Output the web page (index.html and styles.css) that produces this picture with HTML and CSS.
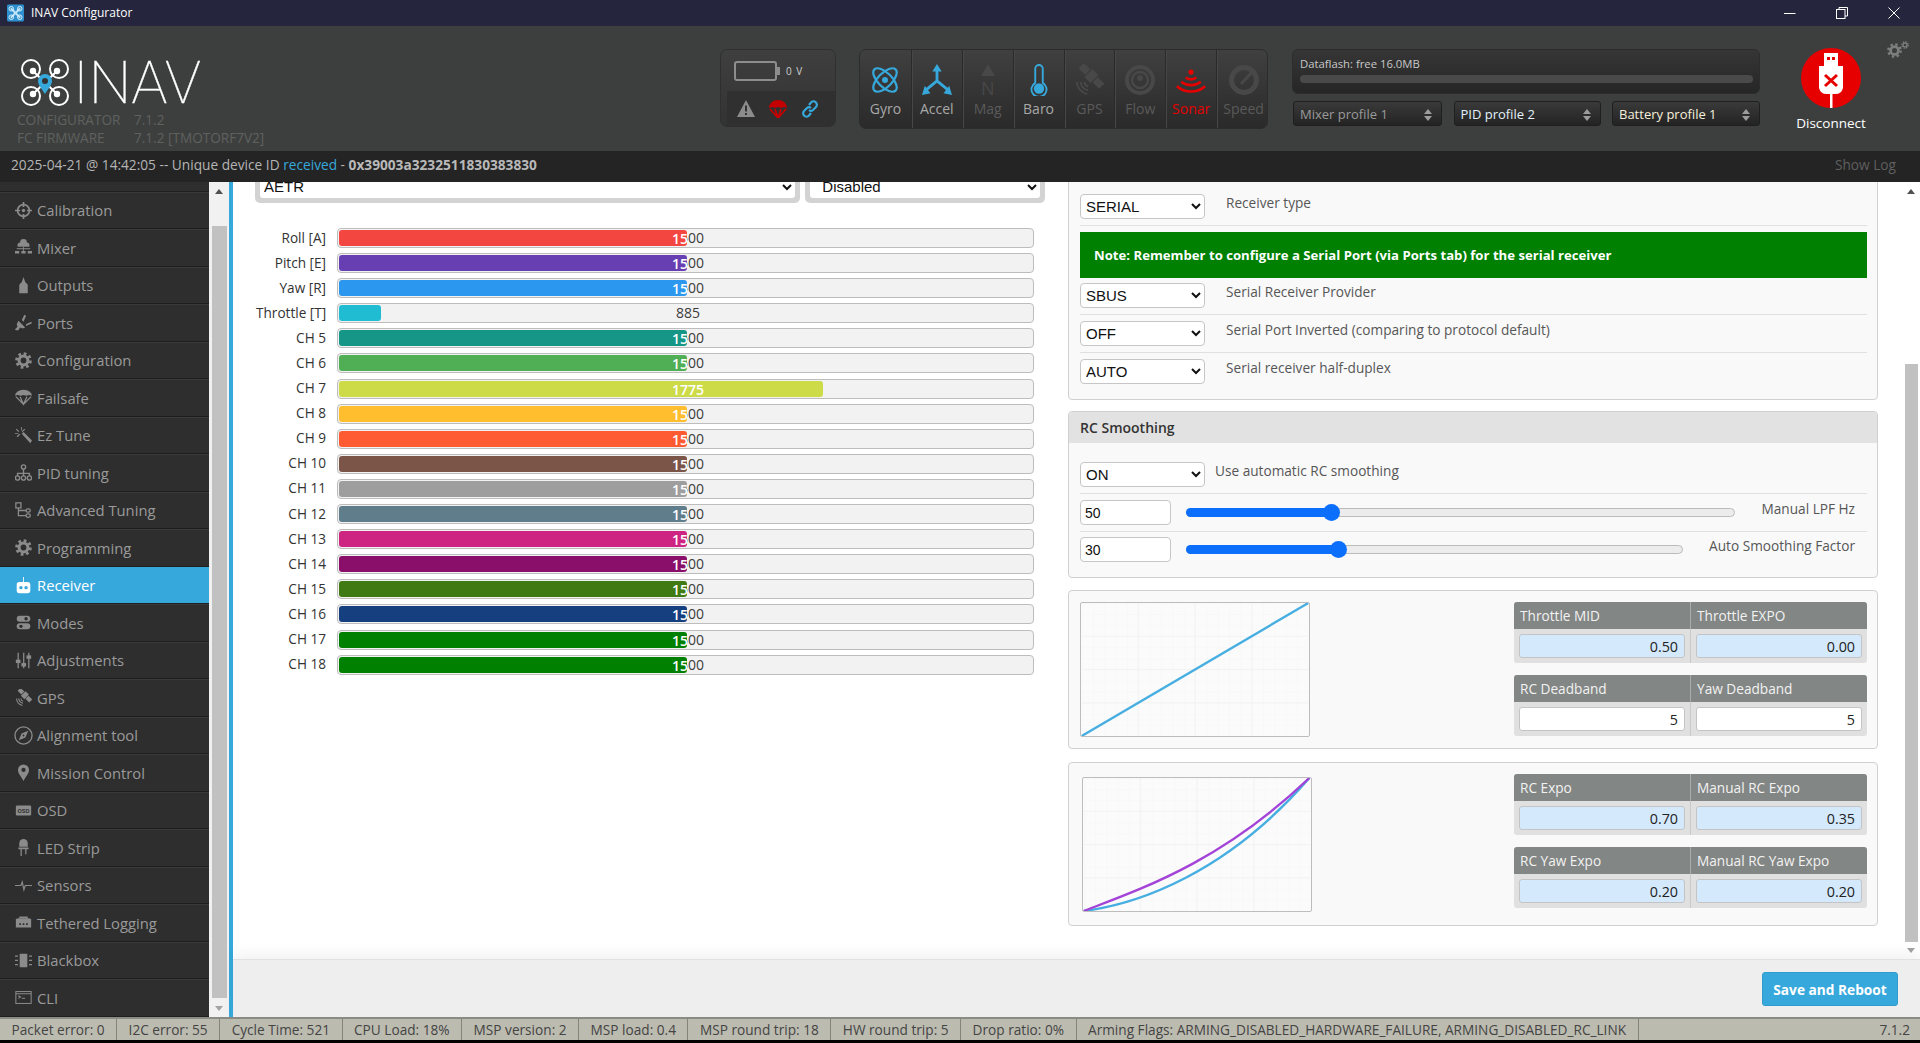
FILE: index.html
```html
<!DOCTYPE html>
<html lang="en">
<head>
<meta charset="utf-8">
<title>INAV Configurator</title>
<link rel="stylesheet" href="styles.css">
</head>
<body>
<svg class="defs" width="0" height="0" aria-hidden="true">
  <symbol id="gear" viewBox="0 0 20 20">
    <circle cx="10" cy="10" r="5.2" fill="none" stroke="currentColor" stroke-width="3.6"/>
    <circle cx="10" cy="10" r="8.2" fill="none" stroke="currentColor" stroke-width="3.2" stroke-dasharray="3.2 3.24"/>
  </symbol>
  <symbol id="sat" viewBox="0 0 32 32">
    <g transform="rotate(45 19 12)" fill="currentColor"><rect x="3" y="8" width="10" height="8"/><rect x="14" y="6" width="9" height="12"/><rect x="24" y="8" width="10" height="8"/></g>
    <path fill="none" stroke="currentColor" stroke-width="2" d="M11 18a6 6 0 0 0 4 5M7 18a10 10 0 0 0 8 9M3 18a14 14 0 0 0 11 13"/>
  </symbol>
</svg>

<header class="titlebar">
  <svg class="app-icon" viewBox="0 0 18 18"><rect width="18" height="18" rx="1.5" fill="#2d8fce"/><path d="M4 4l10 10M14 4L4 14" stroke="#bfe3f7" stroke-width="2"/><circle cx="4.5" cy="4.5" r="2.4" fill="none" stroke="#dff1fb"/><circle cx="13.5" cy="4.5" r="2.4" fill="none" stroke="#dff1fb"/><circle cx="4.5" cy="13.5" r="2.4" fill="none" stroke="#dff1fb"/><circle cx="13.5" cy="13.5" r="2.4" fill="none" stroke="#dff1fb"/></svg>
  <span class="app-title">INAV Configurator</span>
  <div class="winctl">
    <span class="winbtn"><svg width="12" height="12" viewBox="0 0 12 12"><path d="M0 6.5h11.5" stroke="#fff"/></svg></span>
    <span class="winbtn"><svg width="12" height="12" viewBox="0 0 12 12" fill="none" stroke="#fff"><rect x=".5" y="2.5" width="8.5" height="9"/><path d="M3 2.5V.5h8.5v8.5H9"/></svg></span>
    <span class="winbtn"><svg width="12" height="12" viewBox="0 0 12 12"><path d="M.5.5l11 11M11.500.5l-11 11" stroke="#fff"/></svg></span>
  </div>
</header>

<section class="topbar">
  <div class="brand">
    <div class="logo">
      <svg class="logo-mark" viewBox="0 0 48 47" fill="none" stroke="#fff" stroke-width="2">
        <circle cx="10" cy="10" r="9"/><circle cx="38" cy="10" r="9"/><circle cx="10" cy="37" r="9"/><circle cx="38" cy="37" r="9"/>
        <path d="M12 12l24 23M36 12L12 35"/>
        <circle cx="12" cy="12" r="2.2" fill="#fff"/><circle cx="36" cy="12" r="2.2" fill="#fff"/><circle cx="12" cy="35" r="2.2" fill="#fff"/><circle cx="36" cy="35" r="2.2" fill="#fff"/>
        <path d="M24 35c-3-5-7-9-7-13a7 7 0 0 1 14 0c0 4-4 8-7 13z" fill="#37a8db" stroke="none"/>
        <circle cx="24" cy="22" r="3" fill="#333" stroke="none"/>
      </svg>
      <span class="logo-text">INAV</span>
    </div>
    <div class="versions">
      <span>CONFIGURATOR</span><span>7.1.2</span>
      <span>FC FIRMWARE</span><span>7.1.2 [TMOTORF7V2]</span>
    </div>
  </div>

  <div class="battery-box">
    <div class="battery-row">
      <svg width="46" height="20" viewBox="0 0 46 20"><rect x="1" y="1" width="41" height="18" rx="2" fill="none" stroke="#8d8d8d" stroke-width="2"/><rect x="43" y="6" width="3" height="8" fill="#8d8d8d"/></svg>
      <span class="volts">0 V</span>
    </div>
    <div class="status-icons">
      <svg width="18" height="17" viewBox="0 0 18 17"><path d="M9 0l9 17H0z" fill="#8c8c8c"/><path d="M9 5.500v6M9 13v2" stroke="#333" stroke-width="2"/></svg>
      <svg width="18" height="18" viewBox="0 0 18 18"><path d="M0 8a9 8 0 0 1 18 0l-3-1-3 1-3-1-3 1-3-1z" fill="#c40000"/><path d="M1 9l8 9 8-9M6 9l3 9 3-9" fill="none" stroke="#c40000" stroke-width="1.800"/></svg>
      <svg width="18" height="18" viewBox="0 0 18 18" fill="none" stroke="#37a8db" stroke-width="2.200"><path d="M8 5l2-2.500a3.300 3.300 0 0 1 5 4.500l-3 3a3 3 0 0 1-4 0"/><path d="M10 13l-2 2.500a3.300 3.300 0 0 1-5-4.500l3-3a3 3 0 0 1 4 0"/></svg>
    </div>
  </div>

  <div class="sensors">
    <div class="sensor on"><svg class="sensor-icon" viewBox="0 0 30 30" fill="none" stroke="currentColor" stroke-width="2.200"><ellipse cx="15" cy="15" rx="15" ry="7" transform="rotate(45 15 15)"/><ellipse cx="15" cy="15" rx="15" ry="7" transform="rotate(-45 15 15)"/><circle cx="15" cy="15" r="3" fill="currentColor" stroke="none"/></svg><span>Gyro</span></div>
    <div class="sensor on"><svg class="sensor-icon" viewBox="0 0 32 34" fill="currentColor"><path d="M16 18V6M16 18L5 27M16 18l11 9" stroke="currentColor" stroke-width="3" fill="none"/><path d="M16 0l5 8H11zM0 33l3-10 6 8zM32 33l-9-2 6-8z"/></svg><span>Accel</span></div>
    <div class="sensor"><svg class="sensor-icon" viewBox="0 0 30 32" fill="currentColor"><path d="M15 0l7 12H8z"/></svg><span class="mag-n">N</span><span>Mag</span></div>
    <div class="sensor on"><svg class="sensor-icon" viewBox="0 0 30 34" fill="none" stroke="currentColor" stroke-width="2"><path d="M11 20V5a4 4 0 0 1 8 0v15a8 8 0 1 1-8 0z"/><circle cx="15" cy="26" r="5.500" fill="currentColor" stroke="none"/></svg><span>Baro</span></div>
    <div class="sensor"><svg class="sensor-icon"><use href="#sat"/></svg><span>GPS</span></div>
    <div class="sensor"><svg class="sensor-icon" viewBox="0 0 30 30" fill="none" stroke="currentColor"><circle cx="15" cy="15" r="13" stroke-width="4"/><circle cx="15" cy="15" r="8" stroke-width="2.500"/><circle cx="15" cy="13" r="2.500" fill="currentColor"/></svg><span>Flow</span></div>
    <div class="sensor alert"><svg class="sensor-icon" viewBox="0 0 34 30" fill="none" stroke="currentColor" stroke-width="3"><circle cx="17" cy="6" r="3" fill="currentColor" stroke="none"/><path d="M11 12c3 3 9 3 12 0M6 17c6 5 16 5 22 0M1 22c9 8 23 8 32 0"/></svg><span>Sonar</span></div>
    <div class="sensor"><svg class="sensor-icon" viewBox="0 0 30 30" fill="none" stroke="currentColor"><circle cx="15" cy="15" r="12.500" stroke-width="5"/><path d="M12 19L23 7" stroke-width="3"/></svg><span>Speed</span></div>
  </div>

  <div class="profiles">
    <div class="dataflash">
      <span class="df-label">Dataflash: free 16.0MB</span>
      <div class="df-bar"></div>
    </div>
    <div class="profile-row">
      <div class="profile muted">Mixer profile 1<i class="updown"></i></div>
      <div class="profile blue">PID profile 2<i class="updown"></i></div>
      <div class="profile warm">Battery profile 1<i class="updown"></i></div>
    </div>
  </div>

  <div class="connect">
    <svg width="60" height="60" viewBox="0 0 60 60"><circle cx="30" cy="30" r="30" fill="#e60000"/><path d="M23 5h14v13h-14z" fill="#fff"/><path d="M26 9h3v3h-3zM31 9h3v3h-3z" fill="#e60000"/><path d="M18 18h24v22a8 8 0 0 1-8 6h-8a8 8 0 0 1-8-6z" fill="#fff"/><path d="M29 46h2.500v14H29z" fill="#fff"/><path d="M24 27l12 11M36 27L24 38" stroke="#e60000" stroke-width="3"/></svg>
    <span>Disconnect</span>
  </div>

  <svg class="settings" viewBox="0 0 22 17"><use href="#gear" width="15" height="15" x="0" y="2"/><use href="#gear" width="8" height="8" x="14" y="0"/></svg>
</section>

<section class="logbar">
  <span class="log">2025-04-21 @ 14:42:05 -- Unique device ID <em>received</em> - <strong>0x39003a3232511830383830</strong></span>
  <span class="showlog">Show Log</span>
</section>

<div class="workspace">
  <nav class="sidebar">
    <div class="nav-stub"></div>
    <a class="nav"><svg class="ni" viewBox="0 0 20 20" fill="none" stroke="currentColor" stroke-width="2"><circle cx="10" cy="10" r="7"/><path d="M10 0v6M10 14v6M0 10h6M14 10h6"/><circle cx="10" cy="10" r="2" fill="currentColor" stroke="none"/></svg>Calibration</a>
    <a class="nav"><svg class="ni" viewBox="0 0 20 20" fill="currentColor"><path d="M3 7a3 3 0 0 1 3-3 4 4 0 0 1 8 0 3 3 0 0 1 3 3v2H3z"/><path d="M0 14h5v3H0zM7.500 14h5v3h-5zM15 14h5v3h-5zM2 11h16v1H2zM9.500 9h1v5h-1z"/></svg>Mixer</a>
    <a class="nav"><svg class="ni" viewBox="0 0 20 20" fill="currentColor"><path d="M10 0l2 6 3 3v10H5V9l3-3z"/></svg>Outputs</a>
    <a class="nav"><svg class="ni" viewBox="0 0 20 20" fill="currentColor"><path d="M4 8l8 8-3 1-3-1-2 3H1l-1-1 3-3-1-3zM8 7l3-6 2 1-3 7zM13 12l6-3 1 2-7 3z"/></svg>Ports</a>
    <a class="nav"><svg class="ni"><use href="#gear"/></svg>Configuration</a>
    <a class="nav"><svg class="ni" viewBox="0 0 20 20" fill="currentColor"><path d="M0 8a10 7 0 0 1 20 0l-3-1-4 1-3-1-3 1-4-1z"/><path d="M1 9l9 9 9-9M6 9l4 9 4-9" fill="none" stroke="currentColor" stroke-width="1.500"/></svg>Failsafe</a>
    <a class="nav"><svg class="ni" viewBox="0 0 20 20" fill="currentColor"><path d="M8 8l2-2 10 10-2 3z"/><path d="M7 0h1v4H7zM0 7h4v1H0zM2 2l3 3-1 1-3-3zM11 2l1 1-3 3-1-1zM2 11l3-3 1 1-3 3z"/></svg>Ez Tune</a>
    <a class="nav"><svg class="ni" viewBox="0 0 20 20" fill="none" stroke="currentColor" stroke-width="1.600"><circle cx="10" cy="3.500" r="2.500"/><circle cx="3" cy="16.500" r="2.500"/><circle cx="10" cy="16.500" r="2.500"/><circle cx="17" cy="16.500" r="2.500"/><path d="M10 6v8M3 14v-3h14v3"/></svg>PID tuning</a>
    <a class="nav"><svg class="ni" viewBox="0 0 20 20" fill="none" stroke="currentColor" stroke-width="1.500"><rect x="1" y="1" width="6" height="6"/><rect x="13" y="8" width="5" height="4" rx="2"/><rect x="13" y="14" width="5" height="4" rx="2"/><path d="M4 7v9h9M4 10h9"/></svg>Advanced Tuning</a>
    <a class="nav"><svg class="ni"><use href="#gear"/></svg>Programming</a>
    <a class="nav active"><svg class="ni" viewBox="0 0 20 20" fill="currentColor"><path d="M9.500 0h1v7h-1z"/><rect x="2" y="6" width="16" height="13" rx="3"/><circle cx="7" cy="12.500" r="2" fill="#37a8db"/><circle cx="13" cy="12.500" r="2" fill="#37a8db"/></svg>Receiver</a>
    <a class="nav"><svg class="ni" viewBox="0 0 20 20" fill="currentColor"><rect x="2" y="2" width="16" height="7" rx="3.500"/><rect x="2" y="11" width="16" height="7" rx="3.500"/><circle cx="13" cy="5.500" r="2" fill="#2e2e2e"/><circle cx="7" cy="14.500" r="2" fill="#2e2e2e"/></svg>Modes</a>
    <a class="nav"><svg class="ni" viewBox="0 0 20 20" fill="currentColor"><path d="M3 1h1.500v18H3zM9.500 1H11v18H9.500zM15.500 1H17v18h-1.500z"/><rect x="1" y="9" width="5.500" height="4"/><rect x="7.500" y="13" width="5.500" height="4"/><rect x="13.500" y="4" width="5.500" height="4"/></svg>Adjustments</a>
    <a class="nav"><svg class="ni" viewBox="0 0 32 32"><use href="#sat"/></svg>GPS</a>
    <a class="nav"><svg class="ni ni-lg" viewBox="0 0 20 20"><circle cx="10" cy="10" r="9" fill="none" stroke="currentColor" stroke-width="1.400"/><path d="M15 5l-7 3-3 7 7-3zM10 9a1 1 0 1 1 0 2 1 1 0 0 1 0-2z" fill="currentColor"/></svg>Alignment tool</a>
    <a class="nav"><svg class="ni" viewBox="0 0 20 20" fill="currentColor"><path d="M10 20C7 14 3.500 11 3.500 7a6.500 6.500 0 0 1 13 0c0 4-3.500 7-6.500 13zm0-10.500a2.500 2.500 0 1 0 0-5 2.500 2.500 0 0 0 0 5z"/></svg>Mission Control</a>
    <a class="nav"><svg class="ni" viewBox="0 0 20 20"><rect x="1" y="4" width="18" height="12" rx="1.500" fill="currentColor"/><text x="10" y="12.500" class="osd-text">OSD</text></svg>OSD</a>
    <a class="nav"><svg class="ni" viewBox="0 0 20 20" fill="currentColor"><path d="M5 9V5a5 5 0 0 1 10 0v4z"/><path d="M4 10h12v2H4zM6.500 12H8v8H6.500zM12 12h1.500v6H12z"/></svg>LED Strip</a>
    <a class="nav"><svg class="ni" viewBox="0 0 20 20" fill="none" stroke="currentColor" stroke-width="1.400"><path d="M0 10h7l1.500-4 2 9 1.500-5h8"/></svg>Sensors</a>
    <a class="nav"><svg class="ni" viewBox="0 0 20 20" fill="currentColor"><path d="M1 6l3-1h12l3 1v10H1z"/><path d="M5 3h10v2H5z"/><path d="M5 11h2v2H5zM9 11h2v2H9zM13 11h2v2h-2z" fill="#2e2e2e"/></svg>Tethered Logging</a>
    <a class="nav"><svg class="ni" viewBox="0 0 20 20" fill="currentColor"><rect x="5.500" y="2" width="9" height="16" rx="1"/><path d="M0 4h3.500v1.500H0zM0 9h3.500v1.500H0zM0 14h3.500v1.500H0zM16.500 4H20v1.500h-3.500zM16.500 9H20v1.500h-3.500zM16.500 14H20v1.500h-3.500z"/></svg>Blackbox</a>
    <a class="nav"><svg class="ni" viewBox="0 0 20 20" fill="none" stroke="currentColor" stroke-width="1.200"><rect x="1" y="3" width="18" height="14"/><path d="M1 5.500h18M4 8l2.500 1.500L4 11M8 11h4"/></svg>CLI</a>
  </nav>
  <div class="vbar vbar-nav"><i class="arr up"></i><div class="vthumb nav-thumb"></div><i class="arr down"></i></div>

  <main class="content">
    <div class="scroll">
      <div class="columns">
        <div class="col-left">
          <div class="map-row">
            <div class="frame frame-map"><select class="sel-plain"><option>AETR</option></select></div>
            <div class="frame frame-rssi"><select class="sel-plain"><option>Disabled</option></select></div>
          </div>
          <div class="channels">
            <div class="ch"><span class="ch-name">Roll [A]</span><div class="bar"><div class="fill" style="width:50%;background:#f44640"><span class="val white">1500</span></div><span class="val">1500</span></div></div>
            <div class="ch"><span class="ch-name">Pitch [E]</span><div class="bar"><div class="fill" style="width:50%;background:#673fb2"><span class="val white">1500</span></div><span class="val">1500</span></div></div>
            <div class="ch"><span class="ch-name">Yaw [R]</span><div class="bar"><div class="fill" style="width:50%;background:#2b97ee"><span class="val white">1500</span></div><span class="val">1500</span></div></div>
            <div class="ch"><span class="ch-name">Throttle [T]</span><div class="bar"><div class="fill" style="width:6%;background:#20bcd2"><span class="val white">885</span></div><span class="val">885</span></div></div>
            <div class="ch"><span class="ch-name">CH 5</span><div class="bar"><div class="fill" style="width:50%;background:#159687"><span class="val white">1500</span></div><span class="val">1500</span></div></div>
            <div class="ch"><span class="ch-name">CH 6</span><div class="bar"><div class="fill" style="width:50%;background:#50ae55"><span class="val white">1500</span></div><span class="val">1500</span></div></div>
            <div class="ch"><span class="ch-name">CH 7</span><div class="bar"><div class="fill" style="width:69.6%;background:#cddb48"><span class="val white">1775</span></div><span class="val">1775</span></div></div>
            <div class="ch"><span class="ch-name">CH 8</span><div class="bar"><div class="fill" style="width:50%;background:#ffbe2d"><span class="val white">1500</span></div><span class="val">1500</span></div></div>
            <div class="ch"><span class="ch-name">CH 9</span><div class="bar"><div class="fill" style="width:50%;background:#ff5b32"><span class="val white">1500</span></div><span class="val">1500</span></div></div>
            <div class="ch"><span class="ch-name">CH 10</span><div class="bar"><div class="fill" style="width:50%;background:#7a5548"><span class="val white">1500</span></div><span class="val">1500</span></div></div>
            <div class="ch"><span class="ch-name">CH 11</span><div class="bar"><div class="fill" style="width:50%;background:#9e9e9e"><span class="val white">1500</span></div><span class="val">1500</span></div></div>
            <div class="ch"><span class="ch-name">CH 12</span><div class="bar"><div class="fill" style="width:50%;background:#607d8b"><span class="val white">1500</span></div><span class="val">1500</span></div></div>
            <div class="ch"><span class="ch-name">CH 13</span><div class="bar"><div class="fill" style="width:50%;background:#cf2582"><span class="val white">1500</span></div><span class="val">1500</span></div></div>
            <div class="ch"><span class="ch-name">CH 14</span><div class="bar"><div class="fill" style="width:50%;background:#8a0f6a"><span class="val white">1500</span></div><span class="val">1500</span></div></div>
            <div class="ch"><span class="ch-name">CH 15</span><div class="bar"><div class="fill" style="width:50%;background:#3f7a12"><span class="val white">1500</span></div><span class="val">1500</span></div></div>
            <div class="ch"><span class="ch-name">CH 16</span><div class="bar"><div class="fill" style="width:50%;background:#163f80"><span class="val white">1500</span></div><span class="val">1500</span></div></div>
            <div class="ch"><span class="ch-name">CH 17</span><div class="bar"><div class="fill" style="width:50%;background:#008000"><span class="val white">1500</span></div><span class="val">1500</span></div></div>
            <div class="ch"><span class="ch-name">CH 18</span><div class="bar"><div class="fill" style="width:50%;background:#008000"><span class="val white">1500</span></div><span class="val">1500</span></div></div>
          </div>
        </div>

        <div class="col-right">
          <section class="panel panel-rx">
            <div class="row"><select class="sel"><option>SERIAL</option></select><span class="row-label">Receiver type</span></div>
            <div class="note"><b>Note:</b> Remember to configure a Serial Port (via Ports tab) for the serial receiver</div>
            <div class="row"><select class="sel"><option>SBUS</option></select><span class="row-label">Serial Receiver Provider</span></div>
            <div class="row"><select class="sel"><option>OFF</option></select><span class="row-label">Serial Port Inverted (comparing to protocol default)</span></div>
            <div class="row last"><select class="sel"><option>AUTO</option></select><span class="row-label">Serial receiver half-duplex</span></div>
          </section>

          <section class="panel panel-smooth">
            <h3 class="panel-head">RC Smoothing</h3>
            <div class="panel-body">
              <div class="row tight"><select class="sel"><option>ON</option></select><span class="row-label">Use automatic RC smoothing</span></div>
              <div class="row slide-row"><input class="num" value="50"><div class="slider lpf"><div class="slider-fill" style="width:26.3%"></div><i class="thumb" style="left:26.3%"></i></div><span class="row-label end">Manual LPF Hz</span></div>
              <div class="row slide-row last"><input class="num" value="30"><div class="slider auto"><div class="slider-fill" style="width:30.5%"></div><i class="thumb" style="left:30.5%"></i></div><span class="row-label end">Auto Smoothing Factor</span></div>
            </div>
          </section>

          <section class="panel panel-curve">
            <svg class="chart" viewBox="0 0 230 135">
              <defs>
                <pattern id="g1" width="11.500" height="11.250" patternUnits="userSpaceOnUse"><path d="M11.500 0H0V11.250" fill="none" stroke="#f3f3f3" stroke-width=".6"/></pattern>
              </defs>
              <rect width="230" height="135" fill="url(#g1)"/>
              <path d="M57.500 0V135M115 0V135M172.500 0V135M0 33.750H230M0 67.500H230M0 101.250H230" stroke="#f3f3f3"/>
              <path d="M0 135L230 0" stroke="#46aee0" stroke-width="2.400"/>
            </svg>
            <div class="tables">
              <div class="tbl">
                <div class="tbl-cell head">Throttle MID</div><div class="tbl-cell head">Throttle EXPO</div>
                <div class="tbl-cell"><input class="val-input tint" value="0.50"></div><div class="tbl-cell"><input class="val-input tint" value="0.00"></div>
              </div>
              <div class="tbl">
                <div class="tbl-cell head">RC Deadband</div><div class="tbl-cell head">Yaw Deadband</div>
                <div class="tbl-cell"><input class="val-input" value="5"></div><div class="tbl-cell"><input class="val-input" value="5"></div>
              </div>
            </div>
          </section>

          <section class="panel panel-curve expo">
            <svg class="chart" viewBox="0 0 230 135">
              <rect width="230" height="135" fill="url(#g1)"/>
              <path d="M57.500 0V135M115 0V135M172.500 0V135M0 33.750H230M0 67.500H230M0 101.250H230" stroke="#f3f3f3"/>
              <path d="M0 135C55 128 145 97 229 0" fill="none" stroke="#46aee0" stroke-width="2.400"/>
              <path d="M0 135C60 112 140 85 229 0" fill="none" stroke="#a443d8" stroke-width="2.400"/>
            </svg>
            <div class="tables">
              <div class="tbl">
                <div class="tbl-cell head">RC Expo</div><div class="tbl-cell head">Manual RC Expo</div>
                <div class="tbl-cell"><input class="val-input tint" value="0.70"></div><div class="tbl-cell"><input class="val-input tint" value="0.35"></div>
              </div>
              <div class="tbl">
                <div class="tbl-cell head">RC Yaw Expo</div><div class="tbl-cell head">Manual RC Yaw Expo</div>
                <div class="tbl-cell"><input class="val-input tint" value="0.20"></div><div class="tbl-cell"><input class="val-input tint" value="0.20"></div>
              </div>
            </div>
          </section>
        </div>
      </div>
      <div class="vbar vbar-main"><i class="arr up"></i><div class="vthumb main-thumb"></div><i class="arr down"></i></div>
    </div>
    <footer class="actions"><button class="save">Save and Reboot</button></footer>
  </main>
</div>

<footer class="statusbar">
  <span class="stat">Packet error: 0</span>
  <span class="stat">I2C error: 55</span>
  <span class="stat">Cycle Time: 521</span>
  <span class="stat">CPU Load: 18%</span>
  <span class="stat">MSP version: 2</span>
  <span class="stat">MSP load: 0.4</span>
  <span class="stat">MSP round trip: 18</span>
  <span class="stat">HW round trip: 5</span>
  <span class="stat">Drop ratio: 0%</span>
  <span class="stat">Arming Flags: ARMING_DISABLED_HARDWARE_FAILURE, ARMING_DISABLED_RC_LINK</span>
  <span class="version">7.1.2</span>
</footer>
</body>
</html>
```

FILE: styles.css
```css
* { box-sizing: border-box; }
html, body { margin: 0; height: 100%; }
body {
  width: 1920px; height: 1043px; overflow: hidden; background: #000;
  display: flex; flex-direction: column;
  font-family: "Open Sans", "Liberation Sans", sans-serif; font-size: 13.6px; color: #333;
}
.defs { position: absolute; }

/* title bar */
.titlebar { height: 26px; flex: none; background: #25263d; display: flex; align-items: center; padding: 0 0 1px 7px; color: #fff; }
.app-icon { width: 17px; height: 18px; }
.app-title { margin-left: 7px; font-size: 12px; }
.winctl { margin-left: auto; display: flex; }
.winbtn { width: 52px; height: 26px; display: flex; align-items: center; justify-content: center; }

/* header */
.topbar { height: 125px; flex: none; background: #3d3f3e; display: flex; align-items: flex-start; padding: 23px 0 0 17px; position: relative; }
.brand { width: 703px; flex: none; padding-top: 10px; }
.logo { display: flex; align-items: center; height: 47px; padding-left: 4px; }
.logo-mark { width: 48px; height: 47px; }
.logo-text { font-family: Roboto, sans-serif; font-weight: 100; font-size: 60px; line-height: 47px; height: 47px; overflow: visible; color: #fff; margin-left: 4px; -webkit-text-stroke: .35px #fff; }
.versions { display: grid; grid-template-columns: 117px auto; justify-content: start; font-size: 13.6px; line-height: 18px; color: #5f615f; margin-top: 5px; }

.battery-box { width: 116px; height: 78px; flex: none; border: 1px solid #2f2f2f; border-radius: 7px; background: linear-gradient(#3f3f3f, #333); display: flex; flex-direction: column; overflow: hidden; }
.battery-row { height: 41px; display: flex; align-items: center; padding-left: 13px; }
.volts { margin-left: 6px; font-size: 10px; letter-spacing: 1px; color: #cfcfcf; }
.status-icons { flex: 1; margin-left: 6px; background: #303030; display: flex; align-items: center; padding-left: 10px; gap: 14px; }

.sensors { width: 409px; height: 80px; flex: none; margin-left: 23px; border: 1px solid #2c2c2c; border-radius: 7px; background: linear-gradient(#404040, #2a2a2a); display: grid; grid-template-columns: repeat(8, 1fr); overflow: hidden; }
.sensor { position: relative; display: flex; flex-direction: column; align-items: center; color: #484848; border-left: 1px solid #2a2a2a; box-shadow: inset 1px 0 #474747; font-size: 14px; padding-top: 14px; }
.sensor:first-child { border-left: 0; box-shadow: none; }
.sensor:last-child { padding-left: 3px; }
.sensor.on { color: #37a8db; }
.sensor.alert { color: #e60000; }
.sensor-icon { width: 30px; height: 32px; flex: none; }
.sensor span { line-height: 18px; margin-top: 4px; color: #5a5a5a; }
.sensor.on span { color: #a8a8a8; }
.sensor.alert span { color: #e60000; }
.sensor .mag-n { position: absolute; top: 29px; left: 0; right: 0; margin: 0; text-align: center; font-size: 18px; line-height: 18px; color: #484848; }

.profiles { width: 468px; flex: none; margin-left: 24px; }
.dataflash { height: 45px; border: 1px solid #2c2c2c; border-radius: 6px; background: linear-gradient(#363636, #262626); padding: 6px 6px 0 7px; }
.df-label { display: block; font-size: 11.3px; line-height: 15px; color: #c8c8c8; }
.df-bar { height: 8px; margin-top: 4px; border-radius: 4px; background: #4a4a4a; }
.profile-row { display: grid; grid-template-columns: 149px 147px 148px; justify-content: space-between; margin: 7px 0 0 1px; }
.profile { height: 25px; border: 1px solid #1f1f1f; border-radius: 3px; background: linear-gradient(#3a3a3a, #232323); padding-left: 6px; line-height: 24px; font-size: 13px; position: relative; }
.profile.muted { color: #9a9a9a; }
.profile.blue { color: #e2f1fb; }
.profile.warm { color: #f6efdc; }
.updown { position: absolute; right: 9px; top: 7px; width: 0; height: 0; border-left: 4px solid transparent; border-right: 4px solid transparent; border-bottom: 5px solid #9c9c9c; }
.updown::after { content: ""; position: absolute; left: -4px; top: 7px; border-left: 4px solid transparent; border-right: 4px solid transparent; border-top: 5px solid #9c9c9c; }

.connect { width: 80px; flex: none; margin-left: 31px; margin-top: -1px; display: flex; flex-direction: column; align-items: center; color: #fff; font-size: 13.5px; }
.connect span { margin-top: 6px; line-height: 18px; }
.settings { position: absolute; left: 1887px; top: 15px; width: 22px; height: 17px; color: #7d7d7d; }

/* log bar */
.logbar { height: 31px; flex: none; background: #242424; display: flex; align-items: center; justify-content: space-between; padding: 0 24px 4px 11px; font-size: 13.7px; color: #b5b5b5; }
.log em { font-style: normal; color: #37a8db; }
.log strong { font-weight: 700; color: #b9b9b9; }
.showlog { color: #5f5f5f; }

/* workspace */
.workspace { flex: 1; min-height: 0; display: flex; background: #fff; }
.sidebar { width: 209px; flex: none; background: #2e2e2e; display: grid; grid-auto-rows: 37.5px; grid-template-rows: 9.75px; overflow: hidden; }
.nav-stub { border-bottom: 1px solid #1f1f1f; }
.nav { display: flex; align-items: center; border-bottom: 1px solid #1e1e1e; box-shadow: inset 0 1px #3a3a3a; color: #9a9a9a; font-size: 14.8px; padding-left: 14.5px; gap: 5.5px; }
.nav.active { background: #37a8db; color: #fff; box-shadow: none; }
.ni { width: 17px; height: 17px; flex: none; color: #8b8b8b; }
.nav.active .ni { color: #fff; }
.ni-lg { width: 19px; height: 19px; margin-left: -1px; margin-right: -1px; }
.osd-text { font-family: "Liberation Sans", sans-serif; font-size: 6.500px; font-weight: 700; fill: #2e2e2e; text-anchor: middle; }

.vbar { flex: none; background: #f1f1f1; position: relative; display: flex; flex-direction: column; }
.vbar-nav { width: 20px; }
.vthumb { background: #c1c1c1; position: absolute; }
.nav-thumb { left: 3px; right: 2px; top: 44px; bottom: 19px; }
.arr { position: absolute; left: 50%; margin-left: -4px; border-left: 4px solid transparent; border-right: 4px solid transparent; }
.arr.up { top: 7px; border-bottom: 5px solid #505050; }
.arr.down { bottom: 6px; border-top: 5px solid #a3a3a3; }

.content { flex: 1; min-width: 0; border-left: 4px solid #37a8db; display: flex; flex-direction: column; }
.scroll { flex: 1; min-height: 0; display: flex; overflow: hidden; background: #fff; }
.columns { width: 1669px; flex: none; padding-left: 23px; display: flex; gap: 26px; overflow: hidden; }
.vbar-main { width: 18px; background: #fff; }
.main-thumb { left: 3px; right: 2px; top: 182px; height: 578px; }

.col-left { width: 786px; flex: none; }
.map-row { display: flex; margin-top: -11px; width: 790px; margin-left: -1px; }
.frame { height: 32px; background: #d3d3d3; padding: 5px; border-radius: 5px; }
.frame-map { width: 546px; }
.frame-rssi { width: 240px; margin-left: 5px; }
.frame-rssi .sel-plain { padding-left: 8px; }
.sel-plain { width: 100%; height: 22px; border: 0; border-radius: 3px; background: #fff; font: 15px "Liberation Sans", sans-serif; color: #111; padding: 0 0 2px; display: block; }

.channels { margin-top: 25px; display: grid; grid-auto-rows: 20px; row-gap: 5.100px; }
.ch { display: flex; align-items: center; }
.ch-name { width: 70px; text-align: right; white-space: nowrap; color: #333; margin-top: -2px; }
.bar { width: 697px; height: 20px; margin-left: 11px; border: 1.500px solid #bdbdbd; border-radius: 4px; background: #f2f2f2; position: relative; padding: 1px; flex: none; }
.bar > .val { color: #3c3c3c; }
.fill { position: absolute; left: 1px; top: 1px; bottom: 1px; overflow: hidden; border-radius: 3px; z-index: 1; }
.val { position: absolute; left: 0; top: 0; width: 698px; text-align: center; line-height: 17px; font-size: 14px; }
.bar > .val { left: 1px; }
.val.white { color: #fff; font-weight: 600; }

.col-right { width: 810px; flex: none; display: flex; flex-direction: column; gap: 12px; }
.panel { border: 1px solid #d0d0d0; border-radius: 4px; background: #f9f9f9; }
.panel-rx { margin: -10px 0 -1px; padding: 21px 10px 15px 11px; }
.row { display: flex; align-items: flex-start; gap: 21px; padding-bottom: 6px; margin-bottom: 6px; border-bottom: 1px solid #e0e0e0; }
.row.last { border-bottom: 0; padding-bottom: 0; margin-bottom: 0; }
.row.tight { gap: 10px; }
.row-label { line-height: 17px; font-size: 13.65px; color: #565656; white-space: nowrap; }
.row-label.end { margin-left: auto; padding-right: 12px; }
.sel { width: 125px; height: 25px; border: 1px solid #c6c6c6; border-radius: 4px; background: #fff; font: 15px "Liberation Sans", sans-serif; color: #111; padding: 0 1px; flex: none; }
.note { background: #008000; color: #fff; height: 46px; margin-bottom: 5px; padding-left: 14px; line-height: 46px; font-size: 13.15px; font-weight: 700; }
.note b { font-weight: 700; }

.panel-head { margin: 0; height: 31px; background: #e2e2e2; line-height: 31px; padding-left: 11px; font-size: 14px; font-weight: 600; color: #333; border-radius: 3px 3px 0 0; }
.panel-body { padding: 19px 10px 15px 11px; }
.slide-row { gap: 0; margin-bottom: 5px; }
.num { width: 91px; height: 25px; border: 1px solid #c6c6c6; border-radius: 4px; background: #fff; font: 14px "Liberation Sans", sans-serif; color: #111; padding: 0 4px; flex: none; }
.slider { position: relative; height: 9px; margin: 8px 0 0 15px; border: 1px solid #bbb; border-radius: 5px; background: #ececec; flex: none; }
.slider.lpf { width: 549px; }
.slider.auto { width: 497px; }
.slider-fill { position: absolute; left: -1px; top: -1px; bottom: -1px; background: #0b6ffb; border-radius: 5px 0 0 5px; }
.thumb { position: absolute; top: -5px; width: 17px; height: 17px; margin-left: -8px; border-radius: 50%; background: #0b6ffb; }

.panel-curve { display: flex; justify-content: space-between; align-items: flex-start; padding: 11px 10px 11px 11px; }
.chart { width: 230px; height: 135px; border: 1px solid #bdbdbd; border-radius: 2px; background: #fbfbfb; display: block; flex: none; }
.panel-curve.expo { margin-top: 1px; padding-bottom: 13px; }
.expo .chart { margin: 3px 0 0 2px; }
.tables { width: 353px; display: flex; flex-direction: column; gap: 12px; }
.tbl { display: grid; grid-template-columns: 176px 177px; grid-template-rows: 27px 34px; border-radius: 3px; overflow: hidden; background: #e0e0e0; }
.tbl-cell { padding: 5px; }
.tbl-cell:nth-child(even) { border-left: 1px solid #c9c9c9; }
.tbl-cell.head { background: #828684; color: #f2f2f2; font-size: 13.65px; padding: 0 5px 0 6px; line-height: 27px; }
.tbl-cell.head:nth-child(even) { border-left-color: #a9aca9; }
.val-input { width: 100%; height: 24px; display: block; border: 1px solid #c4c4c4; border-radius: 3px; background: #fff; text-align: right; font: 14.3px "Open Sans", sans-serif; color: #222; padding: 0 6px; }
.val-input.tint { background: #d4e9fc; }

.actions { height: 58px; flex: none; background: #eee; border-top: 1px solid #e2e2e2; box-shadow: 0 -6px 12px rgba(0,0,0,.05); position: relative; display: flex; justify-content: flex-end; padding: 12px 22px 0 0; }
.save { width: 136px; height: 34px; border: 1px solid #2f9ccd; border-radius: 3px; background: #37a8db; color: #fff; font: 700 13.7px "Open Sans", sans-serif; }

/* status */
.statusbar { height: 23px; flex: none; margin-bottom: 3px; background: #bcbbb0; border-top: 2px solid #8c8c86; display: flex; align-items: center; font-size: 13.65px; color: #444; }
.stat { padding: 0 11.5px; border-right: 1px solid #85857d; height: 100%; line-height: 21px; white-space: nowrap; }
.version { margin-left: auto; padding-right: 10px; }
```
